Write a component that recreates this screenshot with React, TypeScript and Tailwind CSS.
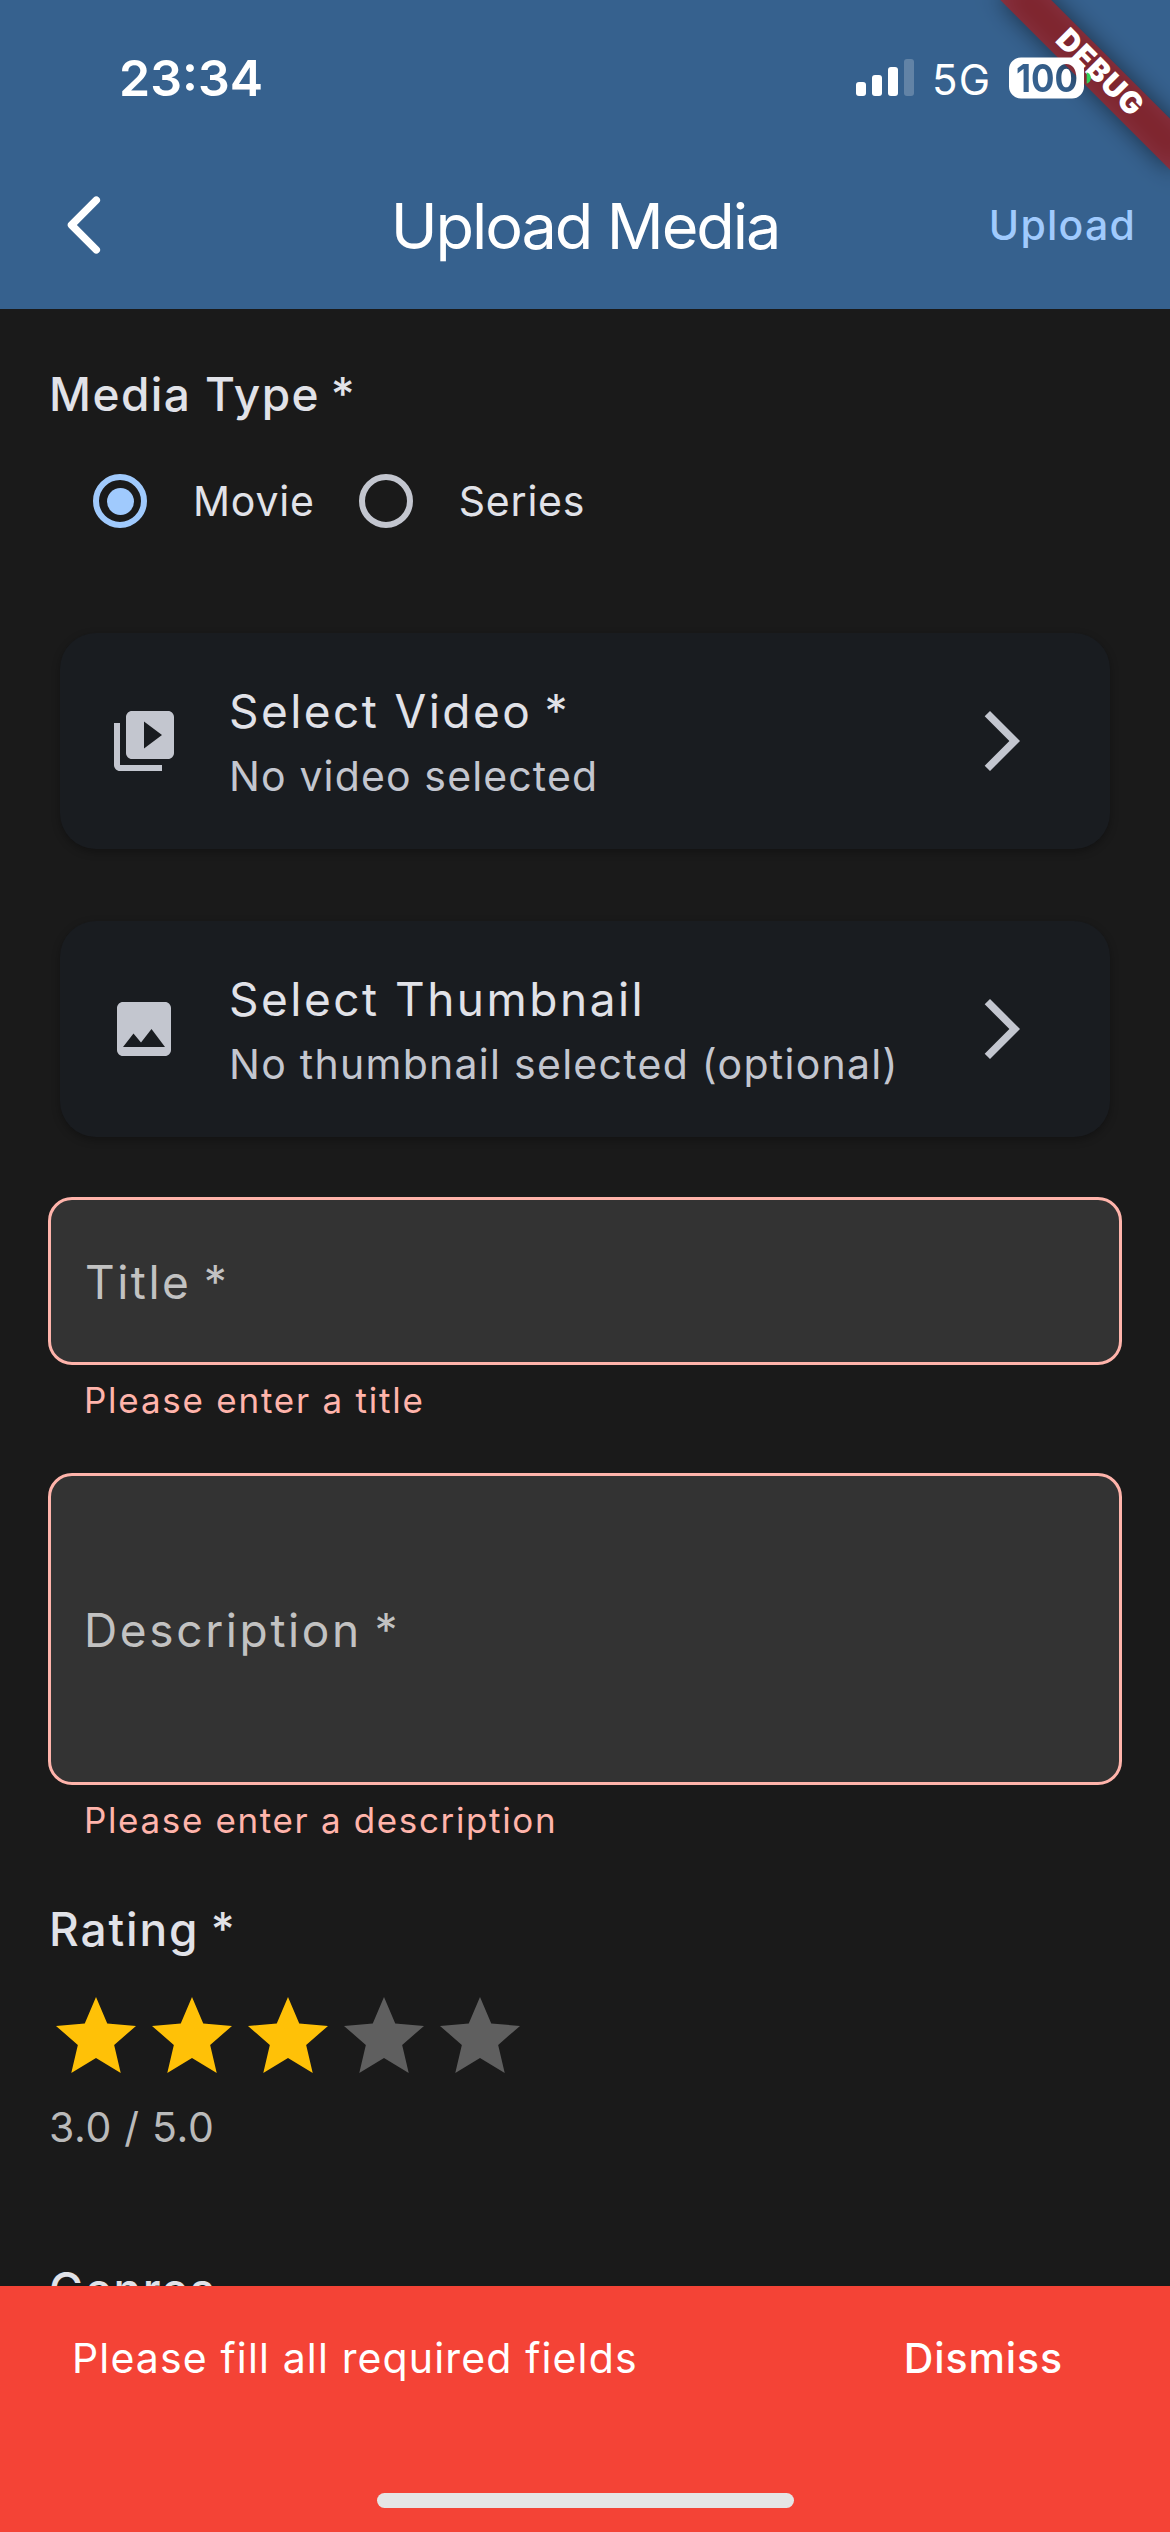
import type { ReactNode } from "react";

function StatusBar() {
  return (
    <div className="relative z-20 flex h-[141px] items-center pt-[15px] pl-[119px] text-white">
      <span className="w-[737px] text-[50px] leading-[60px] font-semibold">23:34</span>
      <svg width="58" height="38" viewBox="0 0 58 38" fill="currentColor">
        <rect x="0" y="23" width="10" height="14" rx="3" />
        <rect x="16" y="16" width="10" height="21" rx="3" />
        <rect x="32" y="8" width="10" height="29" rx="3" />
        <rect x="48" y="0" width="10" height="37" rx="3" opacity="0.22" />
      </svg>
      <span className="ml-[18px] w-[77px] pt-[3px] text-[42px] leading-[50px] tracking-[1.2px]">5G</span>
      <svg width="84" height="42" viewBox="0 0 84 42">
        <mask id="battery-level">
          <rect width="84" height="42" fill="white" />
          <text
            x="7"
            y="34.5"
            fill="black"
            textLength="62"
            lengthAdjust="spacingAndGlyphs"
            className="font-['Inter'] text-[38px] font-bold"
          >
            100
          </text>
        </mask>
        <rect x="0" y="0.5" width="75" height="41" rx="12" fill="white" mask="url(#battery-level)" />
        <path d="M77.7 15.2c2.7 1 4.2 3.2 4.2 5.8s-1.5 4.8-4.2 5.8z" fill="#30d158" />
      </svg>
    </div>
  );
}

function DebugBanner() {
  return (
    <div className="pointer-events-none absolute top-0 right-0 z-10 h-[220px] w-[220px] overflow-hidden">
      <div className="absolute top-0 left-[220px] h-0 w-0 rotate-45">
        <div className="absolute top-[84px] left-[-120px] h-[36px] w-[240px] bg-black/50 blur-[12px]" />
        <div className="absolute top-[84px] left-[-120px] flex h-[36px] w-[240px] items-center justify-center bg-[#b71c1c]/63">
          <span className="relative -top-[2px] left-[2px] text-[30px] leading-[30px] font-black tracking-[1px] text-white">DEBUG</span>
        </div>
      </div>
    </div>
  );
}

function Header() {
  return (
    <header className="h-[309px] shrink-0 bg-[#36618e]">
      <StatusBar />
      <div className="relative flex h-[168px] items-center justify-between pr-[34px] pl-[64px]">
        <svg width="40" height="64" viewBox="0 0 40 64" fill="none" stroke="white" strokeWidth="7.5" strokeLinecap="round" strokeLinejoin="round">
          <path d="M32.3 7.2 7.5 32l24.8 24.8" />
        </svg>
        <h1 className="absolute inset-x-0 pt-[2px] text-center text-[63px] leading-[80px] tracking-[-2.1px] text-white">Upload Media</h1>
        <button className="relative text-[41px] leading-[60px] font-medium tracking-[1.23px] text-[#a0cafd]">Upload</button>
      </div>
    </header>
  );
}

/* Asterisk marking a required field, set slightly closer to its label. */
function Required() {
  return <span className="-ml-[3px]">*</span>;
}

function Radio({ label, checked }: { label: string; checked?: boolean }) {
  return (
    <label className="flex items-center gap-[46px]">
      <span
        className={
          checked
            ? "flex size-[54px] items-center justify-center rounded-full border-6 border-[#a0cafd]"
            : "flex size-[54px] items-center justify-center rounded-full border-6 border-[#c3c6cf]"
        }
      >
        {checked && <span className="size-[27px] rounded-full bg-[#a0cafd]" />}
      </span>
      <span className="text-[41px] leading-[60px] tracking-[0.8px]">{label}</span>
    </label>
  );
}

function PickerCard({ icon, title, subtitle }: { icon: ReactNode; title: ReactNode; subtitle: ReactNode }) {
  return (
    <div className="mx-[12px] flex h-[216px] items-center rounded-[36px] bg-[#191c20] pr-[72px] pl-[48px] text-[#c3c6cf] shadow-[0_3px_9px_rgba(0,0,0,0.3)]">
      <svg width="72" height="72" viewBox="0 0 24 24" fill="currentColor">
        {icon}
      </svg>
      <div className="ml-[49px] flex-1 pt-[5px] whitespace-nowrap">
        {title}
        {subtitle}
      </div>
      <svg width="72" height="72" viewBox="0 0 24 24" fill="currentColor">
        <path d="M6.23 20.23 8 22l10-10L8 2 6.23 3.77 14.46 12z" />
      </svg>
    </div>
  );
}

function Star({ filled }: { filled: boolean }) {
  return (
    <svg width="96" height="96" viewBox="0 0 24 24" className={filled ? "fill-[#ffc107]" : "fill-[#5f5f5f]"}>
      <path d="M12 17.27 18.18 21l-1.64-7.03L22 9.24l-7.19-.61L12 2 9.19 8.63 2 9.24l5.46 4.73L5.82 21z" />
    </svg>
  );
}

export default function App() {
  return (
    <div className="relative flex h-[2532px] w-[1170px] flex-col overflow-hidden bg-[#1a1a1a] font-['Inter',sans-serif] text-[#e1e2e8]">
      <Header />
      <DebugBanner />

      <main className="min-h-0 flex-1 overflow-hidden px-[48px] pt-[48px]">
        <h2 className="pl-px text-[46px] leading-[75px] font-medium tracking-[1.45px]">
          Media Type <Required />
        </h2>
        <div className="flex h-[138px] items-center gap-[44px] pl-[45px]">
          <Radio label="Movie" checked />
          <Radio label="Series" />
        </div>

        <div className="mt-[63px] flex flex-col gap-[72px]">
          <PickerCard
            icon={
              <path d="M4 6H2v14c0 1.1.9 2 2 2h14v-2H4V6zm16-4H8c-1.1 0-2 .9-2 2v12c0 1.1.9 2 2 2h12c1.1 0 2-.9 2-2V4c0-1.1-.9-2-2-2zm-8 12.5v-9l6 4.5-6 4.5z" />
            }
            title={
              <div className="text-[46px] leading-[66px] tracking-[2.43px] text-[#e1e2e8]">
                Select Video <Required />
              </div>
            }
            subtitle={<div className="text-[41px] leading-[65px] tracking-[1.14px]">No video selected</div>}
          />
          <PickerCard
            icon={
              <path d="M21 19V5c0-1.1-.9-2-2-2H5c-1.1 0-2 .9-2 2v14c0 1.1.9 2 2 2h14c1.1 0 2-.9 2-2zM8.5 13.5l2.5 3.01L14.5 12l4.5 6H5l3.5-4.5z" />
            }
            title={<div className="text-[46px] leading-[66px] tracking-[2.49px] text-[#e1e2e8]">Select Thumbnail</div>}
            subtitle={<div className="text-[41px] leading-[65px] tracking-[1.27px]">No thumbnail selected (optional)</div>}
          />
        </div>

        <div className="mt-[60px] flex h-[168px] items-center rounded-[24px] border-3 border-[#ffb4ab] bg-[#333333] pt-[2px] pl-[34px] text-[46px] tracking-[2.5px] text-[#c2c2c2]">
          <span>
            Title <Required />
          </span>
        </div>
        <p className="mt-[13px] pl-[36px] text-[35px] leading-[45px] tracking-[1.77px] text-[#ffb4ab]">Please enter a title</p>

        <div className="mt-[50px] flex h-[312px] items-center rounded-[24px] border-3 border-[#ffb4ab] bg-[#333333] pt-[2px] pl-[33px] text-[46px] tracking-[2.64px] text-[#c2c2c2]">
          <span>
            Description <Required />
          </span>
        </div>
        <p className="mt-[13px] pl-[36px] text-[35px] leading-[45px] tracking-[1.64px] text-[#ffb4ab]">Please enter a description</p>

        <h2 className="mt-[49px] pl-px text-[46px] leading-[75px] font-medium tracking-[1.9px]">
          Rating <Required />
        </h2>
        <div className="mt-[22px] flex">
          {[1, 2, 3, 4, 5].map((n) => (
            <Star key={n} filled={n <= 3} />
          ))}
        </div>
        <p className="mt-[11px] pl-px text-[41px] leading-[63px] tracking-[0.7px] text-[#bababa]">3.0 / 5.0</p>

        <h2 className="mt-[93px] pl-px text-[46px] leading-[75px] font-medium tracking-[1.54px]">Genres</h2>
      </main>

      <footer className="flex h-[246px] shrink-0 flex-col items-center justify-between bg-[#f44336] pb-[24px] text-[41px] leading-[60px] text-white">
        <div className="flex h-[144px] w-full items-center justify-between pr-[107px] pl-[72px]">
          <span className="tracking-[1.14px]">Please fill all required fields</span>
          <button className="font-medium tracking-[0.91px]">Dismiss</button>
        </div>
        <div className="h-[15px] w-[417px] rounded-full bg-[#e5e5e5]" />
      </footer>
    </div>
  );
}
